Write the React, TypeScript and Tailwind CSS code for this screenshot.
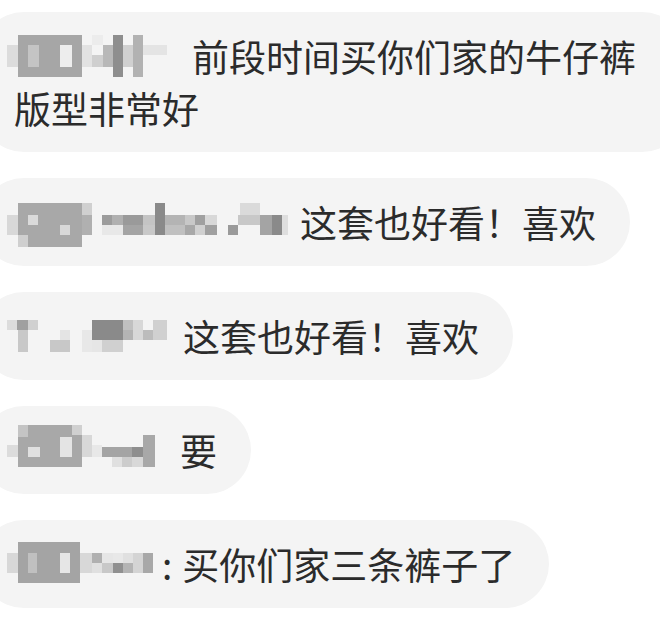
type Cell = [number, number, number, number, string];

// blurred / pixelated user names, drawn as mosaics
const names: Cell[][] = [
  [
    [0, 15, 11, 22, "#dcdcdc"],
    [11, 5, 64, 42, "#a6a6a6"],
    [21, 15, 11, 22, "#c4c4c4"],
    [53, 15, 12, 22, "#ededed"],
    [75, 15, 10, 22, "#e2e2e2"],
    [85, 5, 11, 10, "#ececec"],
    [85, 25, 11, 12, "#cfcfcf"],
    [96, 15, 10, 22, "#b8b8b8"],
    [106, 5, 10, 42, "#8e8e8e"],
    [116, 15, 10, 22, "#d0d0d0"],
    [126, 5, 10, 42, "#b2b2b2"],
    [136, 15, 24, 10, "#e4e4e4"],
  ],
  [
    [0, 19, 11, 20, "#d8d8d8"],
    [11, 7, 64, 44, "#a8a8a8"],
    [11, 39, 10, 12, "#cfcfcf"],
    [21, 19, 10, 10, "#dadada"],
    [53, 29, 10, 10, "#d8d8d8"],
    [75, 7, 10, 12, "#d0d0d0"],
    [75, 19, 10, 20, "#b0b0b0"],
    [95, 19, 10, 10, "#9c9c9c"],
    [105, 19, 11, 10, "#b0b0b0"],
    [116, 19, 20, 10, "#9a9a9a"],
    [136, 19, 12, 10, "#c4c4c4"],
    [158, 19, 20, 10, "#b4b4b4"],
    [178, 19, 10, 10, "#c8c8c8"],
    [188, 19, 10, 10, "#a0a0a0"],
    [198, 19, 12, 10, "#d8d8d8"],
    [95, 29, 21, 10, "#e8e8e8"],
    [116, 29, 20, 10, "#a4a4a4"],
    [136, 29, 12, 10, "#c8c8c8"],
    [158, 29, 20, 10, "#c0c0c0"],
    [178, 29, 10, 10, "#a8a8a8"],
    [188, 29, 10, 10, "#d0d0d0"],
    [198, 29, 12, 10, "#a0a0a0"],
    [148, 7, 10, 32, "#8a8a8a"],
    [221, 29, 10, 10, "#9a9a9a"],
    [233, 7, 20, 12, "#dadada"],
    [231, 19, 22, 10, "#c8c8c8"],
    [253, 19, 22, 20, "#a4a4a4"],
    [265, 19, 10, 20, "#8a8a8a"],
    [275, 19, 6, 20, "#dedede"],
  ],
  [
    [0, 10, 10, 10, "#dcdcdc"],
    [10, 10, 11, 10, "#a0a0a0"],
    [21, 10, 10, 10, "#d0d0d0"],
    [11, 20, 10, 22, "#c8c8c8"],
    [53, 20, 10, 10, "#e4e4e4"],
    [43, 30, 20, 12, "#c8c8c8"],
    [75, 20, 10, 22, "#e8e8e8"],
    [85, 10, 31, 20, "#8a8a8a"],
    [85, 30, 10, 12, "#e6e6e6"],
    [95, 30, 21, 12, "#d0d0d0"],
    [116, 10, 10, 10, "#c0c0c0"],
    [116, 20, 10, 10, "#b4b4b4"],
    [126, 10, 10, 20, "#d8d8d8"],
    [136, 20, 10, 10, "#bcbcbc"],
    [146, 10, 14, 20, "#d0d0d0"],
  ],
  [
    [0, 21, 11, 12, "#dcdcdc"],
    [11, 1, 64, 42, "#a8a8a8"],
    [11, 1, 10, 12, "#c4c4c4"],
    [21, 23, 12, 10, "#e0e0e0"],
    [53, 13, 12, 20, "#e4e4e4"],
    [65, 1, 10, 10, "#d0d0d0"],
    [75, 11, 10, 22, "#d8d8d8"],
    [85, 21, 10, 12, "#e8e8e8"],
    [95, 23, 41, 10, "#a4a4a4"],
    [125, 23, 11, 10, "#8e8e8e"],
    [136, 11, 12, 32, "#a8a8a8"],
    [105, 33, 10, 10, "#e0e0e0"],
    [115, 33, 10, 10, "#cccccc"],
    [125, 33, 11, 10, "#d8d8d8"],
  ],
  [
    [0, 15, 11, 20, "#d8d8d8"],
    [11, 4, 62, 41, "#a4a4a4"],
    [21, 15, 9, 20, "#c0c0c0"],
    [53, 15, 10, 20, "#e6e6e6"],
    [73, 15, 12, 20, "#d8d8d8"],
    [85, 15, 10, 10, "#b0b0b0"],
    [85, 25, 10, 10, "#e0e0e0"],
    [95, 15, 11, 10, "#e6e6e6"],
    [95, 25, 11, 10, "#c8c8c8"],
    [106, 15, 10, 10, "#e8e8e8"],
    [106, 25, 10, 10, "#909090"],
    [116, 15, 10, 10, "#e0e0e0"],
    [116, 25, 10, 10, "#b4b4b4"],
    [126, 15, 10, 20, "#d4d4d4"],
    [136, 15, 10, 20, "#a8a8a8"],
  ],
];

function Mosaic({ cells, width }: { cells: Cell[]; width: number }) {
  return (
    <svg
      width={width}
      height={52}
      viewBox={`0 0 ${width} 52`}
      className="inline-block align-top -ml-[7px]"
    >
      {cells.map(([x, y, w, h, c], i) => (
        <rect key={i} x={x} y={y} width={w} height={h} fill={c} />
      ))}
    </svg>
  );
}

function Bubble({ children, wide }: { children: React.ReactNode; wide?: boolean }) {
  return (
    <div
      className={
        (wide ? "w-[706px] " : "w-fit ") +
        "shrink-0 -ml-[20px] rounded-[44px] bg-[#f4f4f4] py-[18px] pl-[34px] pr-[34px] text-[37px] leading-[52px] text-[#2b2b2b]"
      }
    >
      {children}
    </div>
  );
}

export default function App() {
  return (
    <div
      className="w-[660px] h-[624px] overflow-hidden bg-white pt-[12px] flex flex-col items-start gap-[26px]"
      style={{ fontFamily: '"Noto Sans CJK SC", "Noto Sans", sans-serif' }}
    >
      <Bubble wide>
        <Mosaic cells={names[0]} width={185} />
        前段时间买你们家的牛仔裤版型非常好
      </Bubble>
      <Bubble>
        <Mosaic cells={names[1]} width={293} />
        这套也好看！喜欢
      </Bubble>
      <Bubble>
        <Mosaic cells={names[2]} width={176} />
        这套也好看！喜欢
      </Bubble>
      <Bubble>
        <Mosaic cells={names[3]} width={173} />
        要
      </Bubble>
      <Bubble>
        <Mosaic cells={names[4]} width={155} />
        <span className="mr-[10px]">:</span>买你们家三条裤子了
      </Bubble>
    </div>
  );
}
